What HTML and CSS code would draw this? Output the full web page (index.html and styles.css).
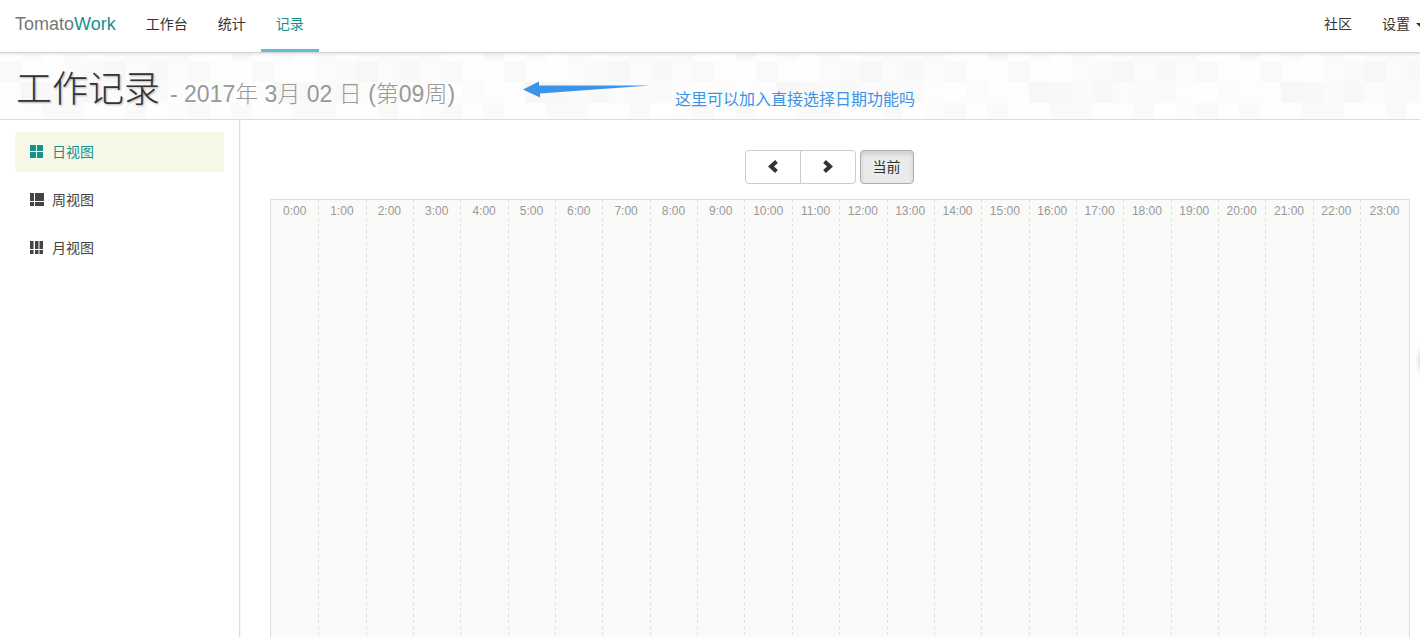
FILE: index.html
```html
<!DOCTYPE html>
<html lang="zh-CN">
<head>
<meta charset="utf-8">
<title>TomatoWork - 工作记录</title>
<link rel="stylesheet" href="styles.css">
</head>
<body>
<header class="navbar">
  <a class="brand" href="#">Tomato<span class="brand-accent">Work</span></a>
  <nav class="nav">
    <a class="nav-link" href="#">工作台</a>
    <a class="nav-link" href="#">统计</a>
    <a class="nav-link active" href="#">记录</a>
  </nav>
  <nav class="nav nav-right">
    <a class="nav-link" href="#">社区</a>
    <a class="nav-link" href="#">设置 <span class="caret"></span></a>
  </nav>
</header>

<section class="page-header">
  <svg class="mosaic" width="100%" height="100%" aria-hidden="true">
    <defs>
      <pattern id="tiles" width="252" height="84" y="-13" patternUnits="userSpaceOnUse">
        <g id="tile-cells" shape-rendering="crispEdges"></g>
      </pattern>
    </defs>
    <rect width="100%" height="100%" fill="url(#tiles)"/>
  </svg>
  <h1 class="title">工作记录 <small class="title-date">- 2017年 3月 02 日 (第09周)</small></h1>
  <svg class="note-arrow" width="128" height="18" viewBox="0 0 128 18" aria-hidden="true">
    <path d="M0 8.500L16 0.500V4.500L127 4.500L17 12.500V16.500Z" fill="#3a94e8"/>
  </svg>
  <p class="note">这里可以加入直接选择日期功能吗</p>
</section>

<div class="layout">
  <aside class="sidebar">
    <a class="side-link active" href="#">
      <svg class="side-icon" viewBox="0 0 14 14" aria-hidden="true"><path d="M0 0h6v6H0zM7 0h6v6H7zM0 7h6v6H0zM7 7h6v6H7z"/></svg>日视图</a>
    <a class="side-link" href="#">
      <svg class="side-icon" viewBox="0 0 14 14" aria-hidden="true"><path d="M0 0h4v8H0zM5 0h9v8H5zM0 9h4v4H0zM5 9h9v4H5z"/></svg>周视图</a>
    <a class="side-link" href="#">
      <svg class="side-icon" viewBox="0 0 14 14" aria-hidden="true"><path d="M0 0h3.500v8H0zM5 0h3.500v8H5zM9.500 0H13v8H9.500zM0 9h3.500v4H0zM5 9h3.500v4H5zM9.500 9H13v4H9.500z"/></svg>月视图</a>
  </aside>
  <main class="main">
    <div class="toolbar">
      <div class="btn-group">
        <button class="btn btn-step" type="button" aria-label="前一天"><svg width="10" height="14" viewBox="0 0 10 14" aria-hidden="true"><path d="M8.500 1.500L3 6.500L8.500 11.500" fill="none" stroke="#333" stroke-width="4"/></svg></button>
        <button class="btn btn-step" type="button" aria-label="后一天"><svg width="10" height="14" viewBox="0 0 10 14" aria-hidden="true"><path d="M1.500 1.500L7 6.500L1.500 11.500" fill="none" stroke="#333" stroke-width="4"/></svg></button>
      </div>
      <button class="btn btn-current" type="button">当前</button>
    </div>
    <div class="calendar" id="calendar"></div>
  </main>
</div>
<div class="side-handle"></div>
<script src="app.js"></script>
</body>
</html>
```
FILE: styles.css
```css
* { box-sizing: border-box; }

body {
  margin: 0;
  height: 100vh;
  display: flex;
  flex-direction: column;
  overflow: hidden;
  background: #fff;
  color: #333;
  font-family: "Liberation Sans", "Noto Sans CJK SC", sans-serif;
  font-size: 14px;
  line-height: 20px;
}

a { color: inherit; text-decoration: none; }

.navbar {
  display: flex;
  flex: none;
  height: 53px;
  border-bottom: 1px solid #d5d5d5;
  box-shadow: 0 1px 3px rgba(0, 0, 0, 0.12);
  position: relative;
  z-index: 1;
}

.brand {
  padding: 14px 15px;
  font-size: 18px;
  color: #777;
}

.brand-accent { color: #14928c; }

.nav { display: flex; }
.nav-right { margin-left: auto; margin-right: -19px; }

.nav-link {
  padding: 14px 15px;
  white-space: nowrap;
}

.nav-link.active {
  color: #14928c;
  border-bottom: 3px solid #5bc0de;
}

.caret {
  display: inline-block;
  margin-left: 2px;
  vertical-align: middle;
  border-top: 4px solid;
  border-left: 4px solid transparent;
  border-right: 4px solid transparent;
}

.page-header {
  position: relative;
  flex: none;
  height: 67px;
  padding: 17px 16px 0;
  border-bottom: 1px solid #ddd;
}

.mosaic { position: absolute; inset: 0; }

.title {
  position: relative;
  margin: 0;
  font-size: 36px;
  font-weight: 300;
  line-height: 40px;
  text-shadow: 1px 1px 2px rgba(0, 0, 0, 0.3);
}

.title-date {
  font-size: 23px;
  color: #999;
  text-shadow: none;
}

.note-arrow { position: absolute; left: 523px; top: 28px; }

.note {
  position: absolute;
  left: 675px;
  top: 37px;
  margin: 0;
  font-size: 16px;
  color: #3a94e8;
}

.layout { display: flex; flex: 1; min-height: 0; }

.sidebar {
  display: flex;
  flex: none;
  flex-direction: column;
  gap: 8px;
  width: 240px;
  padding: 12px 15px;
  border-right: 1px solid #ddd;
  box-shadow: 1px 0 2px rgba(0, 0, 0, 0.05);
}

.side-link {
  display: flex;
  align-items: center;
  gap: 8px;
  height: 40px;
  padding: 0 15px;
  border-radius: 4px;
  color: #444;
}

.side-link.active { background: #f8f8e8; color: #14928c; }
.side-icon { width: 14px; height: 14px; fill: currentColor; }

.main {
  display: flex;
  flex: 1;
  flex-direction: column;
  min-width: 0;
  padding: 30px 10px 0 30px;
}

.toolbar {
  display: flex;
  justify-content: center;
  gap: 4px;
  margin-right: 22px;
  margin-bottom: 15px;
}

.btn-group { display: flex; }

.btn {
  display: flex;
  align-items: center;
  justify-content: center;
  height: 34px;
  padding: 0 12px;
  border: 1px solid #ccc;
  border-radius: 4px;
  background: #fff;
  color: #333;
  font: inherit;
}

.btn-step { width: 56px; }
.btn-step:first-child { border-radius: 4px 0 0 4px; }
.btn-step:last-child { margin-left: -1px; border-radius: 0 4px 4px 0; }

.btn-current {
  background: #ebebeb;
  border-color: #adadad;
  box-shadow: inset 0 3px 5px rgba(0, 0, 0, 0.125);
}

.calendar {
  display: grid;
  grid-template-columns: repeat(23, 1fr) 49px;
  flex: 1;
  border: 1px solid #ddd;
  border-bottom: 0;
  background: #fafaf9;
}

.hour {
  padding-top: 1px;
  background: repeating-linear-gradient(#ddd 0 3px, transparent 3px 6px) left top / 1px 100% no-repeat;
  color: #999;
  font-size: 12px;
  text-align: center;
}

.hour:first-child { background: none; }

.side-handle {
  position: fixed;
  right: -40px;
  top: 341px;
  width: 40px;
  height: 40px;
  border-radius: 50%;
  box-shadow: 0 0 6px rgba(0, 0, 0, 0.25);
}
```
FILE: app.js
```js
const calendar = document.getElementById('calendar');
for (let h = 0; h < 24; h++) {
  const cell = document.createElement('div');
  cell.className = 'hour';
  cell.textContent = h + ':00';
  calendar.appendChild(cell);
}

// Grey level of each 21px cell in the header mosaic.
const shades = [
  'fe fb fe fb fd fc fa fb fa fe ff f9',
  'f9 fd fe fb fa f7 fb f8 fb f9 fd fe',
  'fd f7 f8 fa f8 fb fa fa fd fe fb fd',
  'fe fd fa fa fe fd fa ff fc f9 fe fa'
];
const group = document.getElementById('tile-cells');
shades.forEach((row, y) => row.split(' ').forEach((v, x) => {
  const r = document.createElementNS('http://www.w3.org/2000/svg', 'rect');
  r.setAttribute('x', x * 21);
  r.setAttribute('y', y * 21);
  r.setAttribute('width', 21);
  r.setAttribute('height', 21);
  r.setAttribute('fill', '#' + v + v + v);
  group.appendChild(r);
}));
```
